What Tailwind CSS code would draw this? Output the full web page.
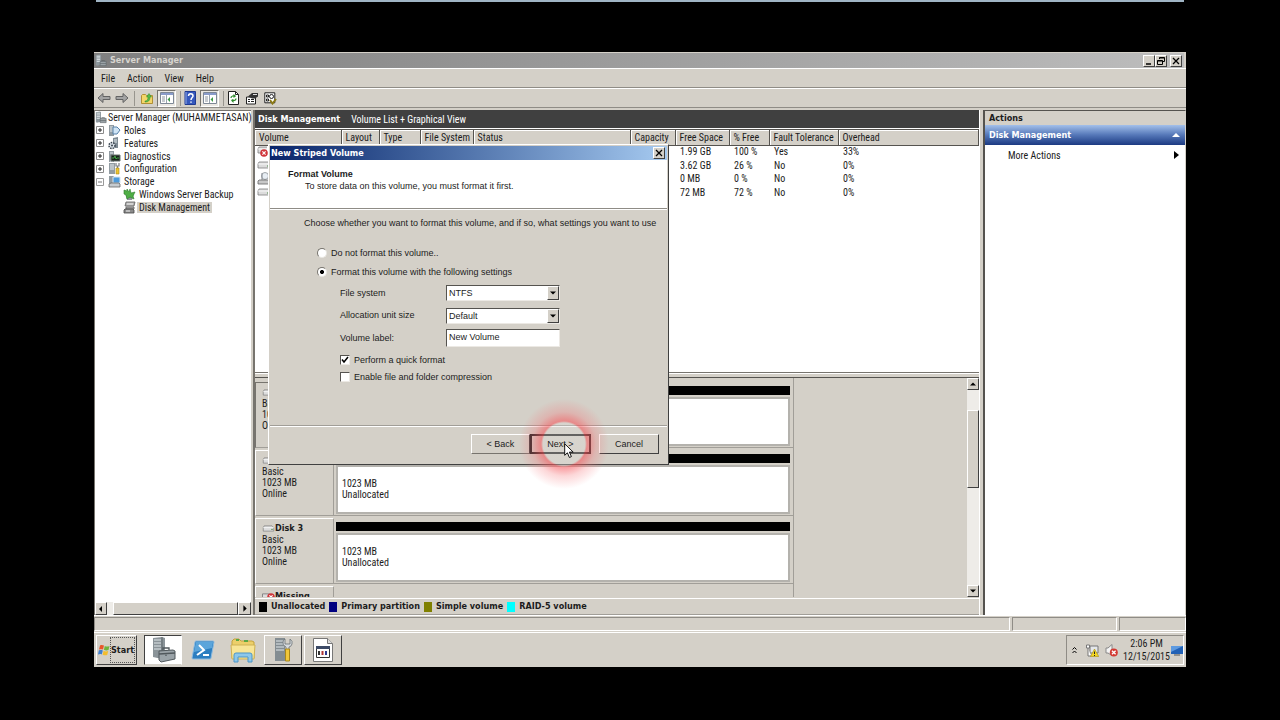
<!DOCTYPE html>
<html lang="en">
<head>
    <meta charset="UTF-8" />
    <meta name="viewport" content="width=device-width, initial-scale=1.0" />
    <script src="https://cdn.jsdelivr.net/npm/@tailwindcss/browser@4"></script>
    <title>Server Manager</title>
</head>

<body class="bg-black min-h-screen flex flex-col font-['Roboto_Condensed',Roboto,sans-serif] text-[10px] leading-[11px] text-[#1c1c1c]">

    <!-- Shared icons -->
    <svg class="hidden">
        <symbol id="i-server" viewBox="0 0 14 14">
            <path d="M1 1l5-1 1 1v11l-5 1-1-1z" fill="#8d979d" />
            <path d="M2 2h4M2 4h4M2 6h4M2 8h4" stroke="#e8eef0" stroke-width="1" />
            <path d="M6 8h7v5H6z" fill="#9aa2a6" stroke="#5d6468" stroke-width=".7" />
            <path d="M8 8V7h3v1M6 10.5h7" stroke="#5d6468" stroke-width=".7" fill="none" />
        </symbol>
        <symbol id="i-drive" viewBox="0 0 14 8">
            <path d="M2 1h9l2 2v4H1V3z" fill="#dcdcdc" stroke="#7d7d7d" stroke-width=".8" />
            <path d="M1 3h12" stroke="#fff" stroke-width=".8" />
            <path d="M10 5h2" stroke="#4f8d4a" stroke-width="1" />
        </symbol>
        <symbol id="i-error" viewBox="0 0 8 8">
            <circle cx="4" cy="4" r="3.8" fill="#d0353a" />
            <path d="M2.4 2.4l3.2 3.2M5.6 2.4L2.4 5.6" stroke="#fff" stroke-width="1.2" />
        </symbol>
        <symbol id="i-panel" viewBox="0 0 14 14">
            <path d="M.5 1.5h13v11H.5z" fill="#fff" stroke="#7e8896" />
            <path d="M1 2h12v2H1z" fill="#8a9ccb" />
            <path d="M2 6h3M2 8h3M2 10h3" stroke="#8d95a0" />
            <path d="M6.5 4v8" stroke="#9aa4b0" />
            <path d="M10 6v5L7.5 8.500z" fill="#3f9a48" />
        </symbol>
    </svg>

    <!-- Edge of the window above -->
    <div class="mx-24 h-[2px] bg-[#9fb4c4]"></div>

    <main class="relative mx-[94px] mt-[50px] mb-[53px] flex-1 flex flex-col bg-[#d4d0c8] border-t border-[#d4d0c8]">

        <!-- Title bar -->
        <header class="flex items-center h-[15px] pl-px pr-[2px] bg-linear-to-r from-[#7f7f7f] to-[#bdbdbd] mr-[2px]">
            <svg class="w-3 h-[13px]"><use href="#i-server" /></svg>
            <h1 class="flex-1 ml-[3px] font-['DejaVu_Sans_Condensed','DejaVu_Sans',sans-serif] text-[9px] font-bold text-[#d8d5cf]">Server Manager</h1>
            <button aria-label="Minimize" class="w-3 h-3 bg-[#d4d0c8] border border-t-white border-l-white border-r-[#404040] border-b-[#404040]"><svg viewBox="0 0 10 10"><path d="M2 8h5" stroke="#000" stroke-width="1.500" /></svg></button>
            <button aria-label="Restore" class="w-3 h-3 bg-[#d4d0c8] border border-t-white border-l-white border-r-[#404040] border-b-[#404040]"><svg viewBox="0 0 10 10" fill="none" stroke="#000"><path d="M3.500 3V1.500h5v4H7M1.500 4.500h5v4h-5zM1.500 5h5M3.500 2h5" /></svg></button>
            <button aria-label="Close" class="w-3 h-3 ml-[3px] bg-[#d4d0c8] border border-t-white border-l-white border-r-[#404040] border-b-[#404040]"><svg viewBox="0 0 10 10"><path d="M2 2l6 6M8 2L2 8" stroke="#000" stroke-width="1.300" /></svg></button>
        </header>

        <!-- Menu -->
        <nav class="flex items-center gap-3 h-5 pl-[7px] border-t border-t-white border-b border-b-[#8f8c86]">
            <button>File</button>
            <button>Action</button>
            <button>View</button>
            <button>Help</button>
        </nav>

        <!-- Toolbar -->
        <div class="flex items-center h-5 pl-[3px] mb-[2px] border-t border-t-white border-b border-b-[#8f8c86]">
            <button aria-label="Back"><svg class="w-[14px] h-[12px]" viewBox="0 0 14 12"><path d="M1 6l5-4.500v3h7v3H6v3z" fill="#a3a3a3" stroke="#636363" /></svg></button>
            <button aria-label="Forward" class="ml-1"><svg class="w-[14px] h-[12px]" viewBox="0 0 14 12"><path d="M13 6L8 1.500v3H1v3h7v3z" fill="#a3a3a3" stroke="#636363" /></svg></button>
            <span class="w-px h-[15px] mx-[5px] bg-[#98958e]"></span>
            <button aria-label="Up one level" class="mx-px"><svg class="w-[12px] h-[12px]" viewBox="0 0 12 12"><path d="M.5 3.500l1-1h3l1 1h6v8H.5z" fill="#f3d56a" stroke="#b08f35" /><path d="M4 9c2 0 3-1 3-4H5.500L8 1.500 10.500 5H9c0 4-2 5-5 5z" fill="#54b948" stroke="#2f8b2c" stroke-width=".5" /></svg></button>
            <button aria-label="Console tree" class="ml-[3px] w-[19px] h-[17px] flex items-center justify-center bg-[#ebe8e3] border border-t-[#77746e] border-l-[#77746e] border-white"><svg class="w-[14px] h-[14px]"><use href="#i-panel" /></svg></button>
            <span class="w-px h-[15px] ml-[4px] mr-[3px] bg-[#98958e]"></span>
            <button aria-label="Help"><svg class="w-[12px] h-[14px]" viewBox="0 0 12 14"><path d="M1 .5h10.500v13H1z" fill="#3558bd" stroke="#1f3a92" /><path d="M2 1v12" stroke="#92a9e6" /><path d="M4.500 5c0-3 4.500-3 4.500 0 0 1.500-2 1.500-2 4M7 10.500v1.300" fill="none" stroke="#fff" stroke-width="1.500" /></svg></button>
            <button aria-label="Action pane" class="ml-[4px] w-[19px] h-[17px] flex items-center justify-center bg-[#ebe8e3] border border-t-[#77746e] border-l-[#77746e] border-white"><svg class="w-[14px] h-[14px]"><use href="#i-panel" /></svg></button>
            <span class="w-px h-[15px] mx-[4px] bg-[#98958e]"></span>
            <button aria-label="Refresh"><svg class="w-[11px] h-[14px]" viewBox="0 0 11 14"><path d="M.5.500h7l3 3v10H.5z" fill="#fff" stroke="#222" /><path d="M7.500.500v3h3" fill="none" stroke="#222" /><path d="M3 7c0-2 3-3 4-1M8 7.500c0 2-3 3-4 1" fill="none" stroke="#2f8b2c" stroke-width="1.300" /><path d="M5.500 3v4L8 5zM5.500 8v4L3 9.500z" fill="#2f8b2c" /></svg></button>
            <button aria-label="Properties" class="ml-[6px]"><svg class="w-[14px] h-[13px]" viewBox="0 0 14 12"><path d="M1.500 4.500h9v7h-9z" fill="#fff" stroke="#222" /><path d="M3 7h2M6 7h3M3 9h2M6 9h3" stroke="#222" /><path d="M3 4l4-3.500h6V4l-3 2H7z" fill="#333" /><path d="M8 2h4" stroke="#ddd" /></svg></button>
            <button aria-label="Settings" class="ml-[5px]"><svg class="w-[13px] h-[13px]" viewBox="0 0 13 13"><path d="M.8.800h10v10h-10z" fill="#fff" stroke="#222" /><path d="M2.500 3h2v2h-2zM2.500 7h2v2h-2z" fill="none" stroke="#222" /><circle cx="7.500" cy="4.500" r="2" fill="none" stroke="#222" /><path d="M6 8l2.500 3.500L12 7" fill="none" stroke="#8c7a16" stroke-width="2" /></svg></button>
        </div>

        <div class="flex-1 flex min-h-0">

            <!-- Console tree -->
            <aside class="w-[157px] flex flex-col bg-white border-t border-l border-[#77746e]">
                <ul class="grid grid-rows-8 h-[103px] whitespace-nowrap">
                    <li class="flex items-center"><svg class="w-3 h-[13px] mr-px"><use href="#i-server" /></svg>Server Manager (MUHAMMETASAN)</li>
                    <li class="flex items-center">
                        <button aria-label="Expand" class="w-[8px] h-[8px] mx-px mr-[4px]"><svg viewBox="0 0 8 8" fill="none" stroke="#222"><path d="M.5.500h7v7h-7z" stroke="#8a8a8a" fill="#fff" /><path d="M2 4h4M4 2v4" /></svg></button>
                        <svg class="w-[13px] h-[13px] mr-[3px]" viewBox="0 0 13 13"><path d="M1 1h5v11H1z" fill="#929ca2" /><path d="M2 3h3M2 5h3M2 7h3" stroke="#e6ecef" /><path d="M5 3h4l3 3-3 4H5z" fill="#cfe4f5" stroke="#5680a8" /></svg>Roles
                    </li>
                    <li class="flex items-center">
                        <button aria-label="Expand" class="w-[8px] h-[8px] mx-px mr-[4px]"><svg viewBox="0 0 8 8" fill="none" stroke="#222"><path d="M.5.500h7v7h-7z" stroke="#8a8a8a" fill="#fff" /><path d="M2 4h4M4 2v4" /></svg></button>
                        <svg class="w-[13px] h-[13px] mr-[3px]" viewBox="0 0 13 13"><path d="M5 1l5-1v11H5z" fill="#7f8b94" /><path d="M6 3h3M6 5h3" stroke="#e6ecef" /><circle cx="4" cy="8.500" r="3" fill="#dce3ea" stroke="#39434e" stroke-width="1.500" stroke-dasharray="1.500 1" /><circle cx="4" cy="8.500" r="1" fill="#39434e" /></svg>Features
                    </li>
                    <li class="flex items-center">
                        <button aria-label="Expand" class="w-[8px] h-[8px] mx-px mr-[4px]"><svg viewBox="0 0 8 8" fill="none" stroke="#222"><path d="M.5.500h7v7h-7z" stroke="#8a8a8a" fill="#fff" /><path d="M2 4h4M4 2v4" /></svg></button>
                        <svg class="w-[13px] h-[13px] mr-[3px]" viewBox="0 0 13 13"><path d="M1 1h5v11H1z" fill="#929ca2" /><path d="M2 3h3M2 11h3" stroke="#e6ecef" /><path d="M3 5h9v6H3z" fill="#18221a" stroke="#6b7470" /><path d="M4 8h2l1-2 1 3 1-1h2" fill="none" stroke="#4cc24f" stroke-width=".8" /></svg>Diagnostics
                    </li>
                    <li class="flex items-center">
                        <button aria-label="Expand" class="w-[8px] h-[8px] mx-px mr-[4px]"><svg viewBox="0 0 8 8" fill="none" stroke="#222"><path d="M.5.500h7v7h-7z" stroke="#8a8a8a" fill="#fff" /><path d="M2 4h4M4 2v4" /></svg></button>
                        <svg class="w-[13px] h-[13px] mr-[3px]" viewBox="0 0 13 13"><path d="M1 1h6v11H1z" fill="#929ca2" /><path d="M2 3h4M2 5h4M2 7h4" stroke="#e6ecef" /><path d="M8 1v3h3V1M9.500 4v3" fill="none" stroke="#7b7f83" stroke-width="1.200" /><path d="M8 6h3v6H8z" fill="#edc52f" stroke="#a9861a" stroke-width=".6" /></svg>Configuration
                    </li>
                    <li class="flex items-center">
                        <button aria-label="Collapse" class="w-[8px] h-[8px] mx-px mr-[4px]"><svg viewBox="0 0 8 8" fill="none" stroke="#777"><path d="M.5.500h7v7h-7z" stroke="#9a9a9a" fill="#fff" /><path d="M2 4h4" /></svg></button>
                        <svg class="w-[13px] h-[13px] mr-[3px]" viewBox="0 0 13 13"><path d="M1 1h5v9H1z" fill="#929ca2" /><path d="M5 2h7v6H5z" fill="#4d9bdc" stroke="#d5e3ee" /><path d="M1 9l2-1h8l1 1v3H1z" fill="#c6cbcf" stroke="#666" stroke-width=".8" /></svg>Storage
                    </li>
                    <li class="flex items-center pl-7">
                        <svg class="w-[13px] h-[13px] mr-[3px]" viewBox="0 0 13 13"><path d="M2 4l4 3 5-1-2 6-5 0z" fill="#8d9498" /><path d="M1 2l3 1V1l2 3 1-3 1 4 4-1-2 4 1 3-4-2-3 2-1-4-2-1z" fill="#4fae45" stroke="#2c7d2a" stroke-width=".6" /></svg>Windows Server Backup
                    </li>
                    <li class="flex items-center pl-7">
                        <svg class="w-[13px] h-[13px] mr-px" viewBox="0 0 13 13"><path d="M3 1h9l-1 4H2zM3 6h8v2H3z" fill="#b5b5b5" stroke="#5d5d5d" stroke-width=".8" /><path d="M2 8h8l1 1v3H1V9z" fill="#8b8b8b" stroke="#444" stroke-width=".8" /><path d="M3 10h4M4 3h6" stroke="#eee" /></svg><span class="px-[2px] bg-[#d4d0c8]">Disk Management</span>
                    </li>
                </ul>
                <div class="mt-auto flex h-[13px] bg-[#eeece8]">
                    <button aria-label="Scroll left" class="w-3 bg-[#d4d0c8] border border-t-white border-l-white border-r-[#404040] border-b-[#404040]"><svg viewBox="0 0 10 10"><path d="M6 2v6L3 5z" /></svg></button>
                    <span class="ml-[6px] flex-1 bg-[#d4d0c8] border border-t-white border-l-white border-r-[#404040] border-b-[#404040]"></span>
                    <button aria-label="Scroll right" class="w-[13px] bg-[#d4d0c8] border border-t-white border-l-white border-r-[#404040] border-b-[#404040]"><svg viewBox="0 0 10 10"><path d="M4 2v6l3-3z" /></svg></button>
                </div>
            </aside>

            <!-- Disk management -->
            <section class="ml-[2px] flex-1 min-w-0 flex flex-col border-l-2 border-r border-l-[#77746e] border-r-white">
                <div class="flex items-center h-[19px] pl-[3px] bg-[#404040] text-white border-b border-white">
                    <h2 class="font-['DejaVu_Sans_Condensed','DejaVu_Sans',sans-serif] text-[9px] font-bold">Disk Management</h2>
                    <span class="ml-[11px]">Volume List + Graphical View</span>
                </div>

                <div class="h-[243px] bg-white border-t border-[#55534f]">
                    <table class="w-full table-fixed text-left whitespace-nowrap">
                        <thead>
                            <tr class="h-[15px] bg-[#d4d0c8] *:font-normal *:pl-1 *:border-r *:border-[#55534f] *:border-b *:shadow-[inset_1px_1px_0_#fff]">
                                <th class="w-[86px]">Volume</th>
                                <th class="w-[38px]">Layout</th>
                                <th class="w-[41px]">Type</th>
                                <th class="w-[53px]">File System</th>
                                <th class="w-[157px]">Status</th>
                                <th class="w-[45px]">Capacity</th>
                                <th class="w-[54px]">Free Space</th>
                                <th class="w-[40px]">% Free</th>
                                <th class="w-[69px]">Fault Tolerance</th>
                                <th>Overhead</th>
                            </tr>
                        </thead>
                        <tbody>
                            <tr class="h-[13px] *:pl-[5px]">
                                <td class="!pl-[2px]"><span class="flex"><svg class="w-[10px] h-[9px]"><use href="#i-drive" width="14" height="8" /></svg><svg class="w-2 h-2 -ml-[7px] mt-[3px]"><use href="#i-error" /></svg></span></td>
                                <td></td><td></td><td></td><td></td><td></td>
                                <td>1.99 GB</td><td>100 %</td><td>Yes</td><td>33%</td>
                            </tr>
                            <tr class="h-[14px] *:pl-[5px]">
                                <td class="!pl-[2px]"><svg class="w-[14px] h-2"><use href="#i-drive" /></svg></td>
                                <td></td><td></td><td></td><td></td><td></td>
                                <td>3.62 GB</td><td>26 %</td><td>No</td><td>0%</td>
                            </tr>
                            <tr class="h-[13px] *:pl-[5px]">
                                <td class="!pl-[2px]"><svg class="w-[13px] h-[13px]" viewBox="0 0 13 13"><circle cx="8" cy="4" r="3.500" fill="#e8eef4" stroke="#8a8f96" stroke-width=".8" /><path d="M5 1v7" stroke="#8a8f96" /><path d="M2 8h10v4H1V9z" fill="#c8c8c8" stroke="#666" stroke-width=".8" /></svg></td>
                                <td></td><td></td><td></td><td></td><td></td>
                                <td>0 MB</td><td>0 %</td><td>No</td><td>0%</td>
                            </tr>
                            <tr class="h-[14px] *:pl-[5px]">
                                <td class="!pl-[2px]"><svg class="w-[14px] h-2"><use href="#i-drive" /></svg></td>
                                <td></td><td></td><td></td><td></td><td></td>
                                <td>72 MB</td><td>72 %</td><td>No</td><td>0%</td>
                            </tr>
                        </tbody>
                    </table>
                </div>

                <!-- Graphical view -->
                <div class="h-[6px] border-t border-t-[#77746e] border-b border-b-[#55534f] shadow-[inset_0_1px_0_#fff]"></div>
                <div class="flex-1 min-h-0 flex">
                    <div class="w-[539px] flex flex-col gap-[2px] pt-[4px] overflow-hidden border-r border-[#a19e98] h-[219px]">
                        <div class="flex shrink-0 h-[66px]">
                            <div class="w-[79px] pl-[6px] pt-1 border border-t-[#77746e] border-l-[#77746e] border-[#a19e98]">
                                <h3 class="flex items-center font-['DejaVu_Sans_Condensed','DejaVu_Sans',sans-serif] text-[9px] font-bold"><svg class="w-[13px] h-[7px]"><use href="#i-drive" /></svg>Disk 1</h3>
                                <p>Basic</p><p>1023 MB</p><p>Online</p>
                            </div>
                            <div class="flex-1 pl-[2px] pt-[4px] pr-[3px] border-b border-[#a19e98]">
                                <div class="h-[9px] bg-black"></div>
                                <div class="mt-[2px] h-[49px] bg-white border-2 border-[#b4b2ad]"></div>
                            </div>
                        </div>
                        <div class="flex shrink-0 h-[66px]">
                            <div class="w-[79px] pl-[6px] pt-1 border border-t-white border-l-white border-[#a19e98]">
                                <h3 class="flex items-center font-['DejaVu_Sans_Condensed','DejaVu_Sans',sans-serif] text-[9px] font-bold"><svg class="w-[13px] h-[7px]"><use href="#i-drive" /></svg>Disk 2</h3>
                                <p>Basic</p><p>1023 MB</p><p>Online</p>
                            </div>
                            <div class="flex-1 pl-[2px] pt-[4px] pr-[3px] border-b border-[#a19e98]">
                                <div class="h-[9px] bg-black"></div>
                                <div class="mt-[2px] h-[49px] pl-1 pt-[11px] bg-white border-2 border-[#b4b2ad]"><p>1023 MB</p><p>Unallocated</p></div>
                            </div>
                        </div>
                        <div class="flex shrink-0 h-[66px]">
                            <div class="w-[79px] pl-[6px] pt-1 border border-t-white border-l-white border-[#a19e98]">
                                <h3 class="flex items-center font-['DejaVu_Sans_Condensed','DejaVu_Sans',sans-serif] text-[9px] font-bold"><svg class="w-[13px] h-[7px]"><use href="#i-drive" /></svg>Disk 3</h3>
                                <p>Basic</p><p>1023 MB</p><p>Online</p>
                            </div>
                            <div class="flex-1 pl-[2px] pt-[4px] pr-[3px] border-b border-[#a19e98]">
                                <div class="h-[9px] bg-black"></div>
                                <div class="mt-[2px] h-[49px] pl-1 pt-[11px] bg-white border-2 border-[#b4b2ad]"><p>1023 MB</p><p>Unallocated</p></div>
                            </div>
                        </div>
                        <div class="flex shrink-0 h-[66px]">
                            <div class="w-[79px] pl-[6px] pt-1 border border-t-white border-l-white border-[#a19e98]">
                                <h3 class="flex items-center font-['DejaVu_Sans_Condensed','DejaVu_Sans',sans-serif] text-[9px] font-bold"><svg class="w-[8px] h-[7px]" viewBox="0 0 8 8"><path d="M0 1h8v6H0z" fill="#dcdcdc" stroke="#7d7d7d" /></svg><svg class="w-[8px] h-2 -ml-[3px]"><use href="#i-error" /></svg>Missing</h3>
                            </div>
                        </div>
                    </div>
                    <div class="flex-1"></div>
                    <div class="w-3 h-[219px] flex flex-col bg-[#eeece8]">
                        <button aria-label="Scroll up" class="h-3 bg-[#d4d0c8] border border-t-white border-l-white border-r-[#404040] border-b-[#404040]"><svg viewBox="0 0 10 10"><path d="M2 6.500h6l-3-3z" /></svg></button>
                        <span class="mt-5 h-[78px] bg-[#d4d0c8] border border-t-white border-l-white border-r-[#404040] border-b-[#404040]"></span>
                        <button aria-label="Scroll down" class="mt-auto h-3 bg-[#d4d0c8] border border-t-white border-l-white border-r-[#404040] border-b-[#404040]"><svg viewBox="0 0 10 10"><path d="M2 3.500h6l-3 3z" /></svg></button>
                    </div>
                </div>

                <!-- Legend -->
                <ul class="flex items-center gap-1 h-[17px] pl-1 border-t border-white border-b border-b-[#a19e98] font-['DejaVu_Sans_Condensed','DejaVu_Sans',sans-serif] text-[9px] font-bold">
                    <li class="flex items-center gap-1"><span class="w-2 h-[10px] bg-black"></span>Unallocated</li>
                    <li class="flex items-center gap-1"><span class="w-2 h-[10px] bg-[#000080]"></span>Primary partition</li>
                    <li class="flex items-center gap-1"><span class="w-2 h-[10px] bg-[#808000]"></span>Simple volume</li>
                    <li class="flex items-center gap-1"><span class="w-2 h-[10px] bg-[#00ffff]"></span>RAID-5 volume</li>
                </ul>
            </section>

            <!-- Actions -->
            <aside class="ml-[3px] w-[203px] bg-white border-t border-l-2 border-r border-[#55534f] border-r-[#d4d0c8]">
                <h2 class="flex items-center h-[14px] pl-1 bg-[#d4d0c8] font-['DejaVu_Sans_Condensed','DejaVu_Sans',sans-serif] text-[9px] font-bold">Actions</h2>
                <div class="flex items-center h-5 pl-1 pr-[5px] bg-linear-to-b from-[#a3c0ea] via-[#5577b8] to-[#1c3a82] text-white">
                    <h3 class="flex-1 font-['DejaVu_Sans_Condensed','DejaVu_Sans',sans-serif] text-[9px] font-bold">Disk Management</h3>
                    <svg class="w-2 h-[6px]" viewBox="0 0 8 6"><path d="M0 5h8L4 1z" fill="#fff" /></svg>
                </div>
                <button class="flex w-full items-center justify-between h-5 pl-[23px] pr-[6px]">More Actions
                    <svg class="w-[5px] h-2" viewBox="0 0 5 8"><path d="M0 0v8l5-4z" /></svg>
                </button>
            </aside>
        </div>

        <!-- Status bar -->
        <div class="flex gap-[2px] h-[17px] pt-px pb-px border-t border-white *:border *:border-t-[#8f8c86] *:border-l-[#8f8c86] *:border-r-white *:border-b-white">
            <span class="flex-1"></span>
            <span class="w-[105px]"></span>
            <span class="w-[67px]"></span>
        </div>

        <!-- Taskbar -->
        <footer class="flex items-center h-[35px] pl-[2px] pr-[2px] border-t border-white">
            <button class="flex items-center w-[41px] h-[30px] pl-px border border-t-white border-l-white border-r-[#404040] border-b-[#404040]">
                <svg class="w-3 h-3" viewBox="0 0 12 12"><path d="M2 1.500c1.500-.8 2.700-.5 4 .1L5 5.500C3.700 5 2.500 5 1 5.600z" fill="#e8572a" /><path d="M6.800 2c1.500.8 3 .8 4.700 0l-1 4c-1.500.7-3 .7-4.600-.2z" fill="#6fb43c" /><path d="M.8 6.500c1.500-.7 2.700-.6 4-.1l-1 4C2.500 9.800 1.300 9.900 0 10.500z" fill="#3f7fd0" /><path d="M5.600 6.800c1.500.8 3 .8 4.600.2l-1 3.900c-1.600.7-3 .6-4.600-.2z" fill="#f3bd2d" /></svg>
                <span class="h-[26px] flex items-center border border-dotted border-[#555] font-['DejaVu_Sans_Condensed','DejaVu_Sans',sans-serif] text-[9px] font-bold">Start</span>
            </button>
            <button aria-label="Server Manager" class="ml-[7px] w-[38px] h-[30px] flex items-center justify-center bg-white border border-t-[#404040] border-l-[#404040] border-r-white border-b-[#d4d0c8]">
                <svg class="w-7 h-7" viewBox="0 0 28 28"><path d="M4 2l9-1 3 1v20l-3 1-9-2z" fill="#8b9499" /><path d="M5 4h7M5 7h7M5 10h7M5 13h7" stroke="#e0e7ea" /><path d="M13 1v22" stroke="#5d666b" /><path d="M10 15l14-1 2 1v8l-14 3-2-2z" fill="#9aa3a8" stroke="#50585c" /><path d="M14 14v-2h6v2M10 18l16-1M17 17v3" fill="none" stroke="#50585c" stroke-width="1.300" /></svg>
            </button>
            <button aria-label="PowerShell" class="ml-2 w-[26px] h-[30px] flex items-center justify-center">
                <svg class="w-6 h-6" viewBox="0 0 24 24"><path d="M5 3h17q1 0 1 1l-3 16q0 1-1 1H2q-1 0-1-1L4 4q0-1 1-1z" fill="#2c7ec0" stroke="#8dbbe0" /><path d="M5 4h17l-1 6L3 14z" fill="#5ba5db" /><path d="M8 7l5 5-7 5M12 17h6" fill="none" stroke="#fff" stroke-width="2" /></svg>
            </button>
            <button aria-label="Explorer" class="ml-[13px] w-[28px] h-[30px] flex items-center justify-center">
                <svg class="w-[26px] h-[26px]" viewBox="0 0 26 26"><path d="M2 4l2-2h5l2 2h11l2 1v16H2z" fill="#eccf6a" stroke="#c4a23c" /><path d="M6 3h3M14 4h4" stroke="#5aa745" stroke-width="2" /><path d="M1 8h24l-1 14H2z" fill="#f8e596" stroke="#cfb254" /><path d="M4 25v-7q0-2 2-2h14q2 0 2 2v7h-4v-5H8v5z" fill="#8cc7ea" stroke="#4c95c7" /></svg>
            </button>
            <button aria-label="Configuration" class="ml-[7px] w-[38px] h-[30px] flex items-center justify-center border border-t-white border-l-white border-r-[#404040] border-b-[#404040]">
                <svg class="w-[26px] h-[26px]" viewBox="0 0 26 26"><path d="M5 1h10v23H5z" fill="#848d92" /><path d="M6 4h8M6 7h8M6 10h8M6 13h8" stroke="#e0e7ea" /><path d="M15 2v5h5V2q3 2 2 5-1 3-3 3v4h-3v-4q-4-2-3-5 0-2 2-3z" fill="#d6dade" stroke="#6b7175" stroke-width=".8" /><path d="M15.500 12h4v12h-4z" fill="#f0c63a" stroke="#a9861a" /></svg>
            </button>
            <button aria-label="Script" class="ml-[2px] w-[38px] h-[30px] flex items-center justify-center border border-t-white border-l-white border-r-[#404040] border-b-[#404040]">
                <svg class="w-[22px] h-[26px]" viewBox="0 0 22 26"><path d="M1.500 1.500h14l5 5v18h-19z" fill="#fff" stroke="#777" /><path d="M15.500 1.500v5h5" fill="#ddd" stroke="#777" /><path d="M4.500 9.500h13v11h-13z" fill="#fff" stroke="#333" /><path d="M4 9h14v3H4z" fill="#3c4a66" /><path d="M7 14v4" stroke="#333" stroke-width="2" /><path d="M10.500 14v4" stroke="#b03636" stroke-width="2" /><path d="M14 14v4" stroke="#303a90" stroke-width="2" /></svg>
            </button>

            <div class="ml-auto flex items-center w-[118px] h-[30px] pl-[5px] border border-t-[#8f8c86] border-l-[#8f8c86] border-r-white border-b-white">
                <button aria-label="Show hidden icons"><svg class="w-[5px] h-2" viewBox="0 0 5 8" fill="none" stroke="#000"><path d="M.5 3.500l2-2 2 2M.5 7l2-2 2 2" /></svg></button>
                <svg class="ml-[9px] w-[13px] h-[13px]" viewBox="0 0 13 13"><path d="M4 2h8v7H4z" fill="#e4e7ea" stroke="#777" /><path d="M.5 1h3v3h-3zM2 4v8h3" fill="#fff" stroke="#777" /><path d="M8.500 5l4.300 7.500H4.500z" fill="#f5d722" stroke="#a48d13" stroke-width=".6" /><path d="M8.500 7.500v2.500M8.500 11v1" stroke="#222" /></svg>
                <svg class="ml-[6px] w-[13px] h-[13px]" viewBox="0 0 13 13"><path d="M1 4h2l4-3.500v11L3 9H1z" fill="#f4f4f4" stroke="#888" /><circle cx="8.800" cy="8.500" r="4" fill="#d33a33" /><path d="M7 6.700l3.600 3.600M10.600 6.700L7 10.300" stroke="#fff" stroke-width="1.300" /></svg>
                <p class="flex-1 pl-1 text-center leading-[13px]">2:06 PM<br>12/15/2015</p>
                <svg class="w-3 h-[11px]" viewBox="0 0 12 11"><path d="M0 1h12v8H0z" fill="#2261b5" /><path d="M0 1h12L0 7z" fill="#5d9ae0" /><path d="M3 10h6" stroke="#555" /></svg>
            </div>
        </footer>

        <!-- Wizard -->
        <div role="dialog" aria-labelledby="wizard-title" class="absolute left-[174px] top-[91px] w-[401px] h-[321px] flex flex-col p-px bg-[#d4d0c8] border border-t-white border-l-white border-r-[#404040] border-b-[#404040] font-['Liberation_Sans_Narrow','Liberation_Sans',Arial,sans-serif] text-[9px] leading-[10px]">
            <div class="flex items-center justify-between h-[14px] pl-px pr-[2px] bg-linear-to-r from-[#0a246a] to-[#a6caf0]">
                <h2 id="wizard-title" class="font-['DejaVu_Sans_Condensed','DejaVu_Sans',sans-serif] font-bold text-white">New Striped Volume</h2>
                <button aria-label="Close wizard" class="w-3 h-3 bg-[#d4d0c8] border border-t-white border-l-white border-r-[#404040] border-b-[#404040]"><svg viewBox="0 0 10 10"><path d="M2 2l6 6M8 2L2 8" stroke="#000" stroke-width="1.300" /></svg></button>
            </div>
            <div class="h-[49px] pl-[18px] pt-[9px] bg-white border-b border-[#8f8c86]">
                <h3 class="font-['Liberation_Sans',Arial,sans-serif] font-bold">Format Volume</h3>
                <p class="pl-[17px] mt-[2px]">To store data on this volume, you must format it first.</p>
            </div>
            <form class="flex-1 flex flex-col border-t border-white">
                <p class="mt-2 pl-[34px]">Choose whether you want to format this volume, and if so, what settings you want to use</p>
                <div class="mt-5 pl-[47px] flex flex-col gap-[9px]">
                    <label class="flex items-center gap-1"><input type="radio" name="format" class="appearance-none w-[10px] h-[10px] rounded-full bg-white border border-t-[#77746e] border-l-[#77746e] border-[#e8e6e1]" />Do not format this volume..</label>
                    <label class="flex items-center gap-1"><input type="radio" name="format" checked class="appearance-none w-[10px] h-[10px] rounded-full bg-white border border-t-[#77746e] border-l-[#77746e] border-[#e8e6e1] checked:bg-radial checked:from-black checked:from-30% checked:to-white checked:to-40%" />Format this volume with the following settings</label>
                </div>
                <div class="mt-2 ml-[70px] grid grid-cols-[106px_114px] gap-y-[5px] items-center">
                    <label for="fs">File system</label>
                    <div class="relative">
                        <select id="fs" class="appearance-none w-full h-4 pl-[2px] bg-white border border-t-[#55534f] border-l-[#55534f] border-[#ece9e4]"><option>NTFS</option></select>
                        <svg class="absolute right-px top-px w-3 h-[14px] bg-[#d4d0c8] border border-t-white border-l-white border-r-[#404040] border-b-[#404040] pointer-events-none" viewBox="0 0 10 12"><path d="M2 4.500h6l-3 3z" /></svg>
                    </div>
                    <label for="unit">Allocation unit size</label>
                    <div class="relative mt-[2px]">
                        <select id="unit" class="appearance-none w-full h-4 pl-[2px] bg-white border border-t-[#55534f] border-l-[#55534f] border-[#ece9e4]"><option>Default</option></select>
                        <svg class="absolute right-px top-px w-3 h-[14px] bg-[#d4d0c8] border border-t-white border-l-white border-r-[#404040] border-b-[#404040] pointer-events-none" viewBox="0 0 10 12"><path d="M2 4.500h6l-3 3z" /></svg>
                    </div>
                    <label for="vol">Volume label:</label>
                    <input id="vol" type="text" value="New Volume" class="w-full h-[18px] pl-[2px] pb-[2px] bg-white border border-t-[#55534f] border-l-[#55534f] border-[#ece9e4]" />
                </div>
                <div class="mt-2 ml-[70px] flex flex-col gap-[7px]">
                    <label class="flex items-center gap-1"><span class="relative flex"><input type="checkbox" checked class="appearance-none w-[10px] h-[10px] bg-white border border-t-[#55534f] border-l-[#55534f] border-[#ece9e4]" /><svg class="absolute inset-px w-2 h-2" viewBox="0 0 8 8"><path d="M1 3.500l2 2.500 4-5" fill="none" stroke="#000" stroke-width="1.500" /></svg></span>Perform a quick format</label>
                    <label class="flex items-center gap-1"><input type="checkbox" class="appearance-none w-[10px] h-[10px] bg-white border border-t-[#55534f] border-l-[#55534f] border-[#ece9e4]" />Enable file and folder compression</label>
                </div>
                <div class="mt-auto flex justify-end pt-2 pb-[9px] pr-2 border-t border-[#a19e98] shadow-[inset_0_1px_0_#fff]">
                    <button type="button" class="w-[59px] h-5 border border-t-white border-l-white border-r-[#404040] border-b-[#77746e]">&lt; Back</button>
                    <button type="button" class="relative w-[61px] h-5 border-2 border-[#222]">
                        <!-- click highlight -->
                        <span class="absolute left-1/2 top-1/2 -translate-1/2 ml-[3px] w-[92px] h-[92px] rounded-full pointer-events-none bg-[radial-gradient(circle,rgba(222,220,215,0.35)_0_21px,rgba(245,90,95,0.6)_23px,rgba(245,110,115,0.28)_32px,rgba(245,120,125,0)_45px)]"></span>
                        <span class="relative">Next &gt;</span>
                        <svg class="absolute left-[32px] top-[7px] w-[10px] h-4 pointer-events-none" viewBox="0 0 10 16"><path d="M.7.800v11.500l2.700-2.500 2 4.700 2-.9-2-4.500h3.800z" fill="#fff" stroke="#000" stroke-width=".9" /></svg>
                    </button>
                    <button type="button" class="ml-2 w-[60px] h-5 border border-t-white border-l-white border-r-[#404040] border-b-[#404040]">Cancel</button>
                </div>
            </form>
        </div>
    </main>
</body>
</html>
